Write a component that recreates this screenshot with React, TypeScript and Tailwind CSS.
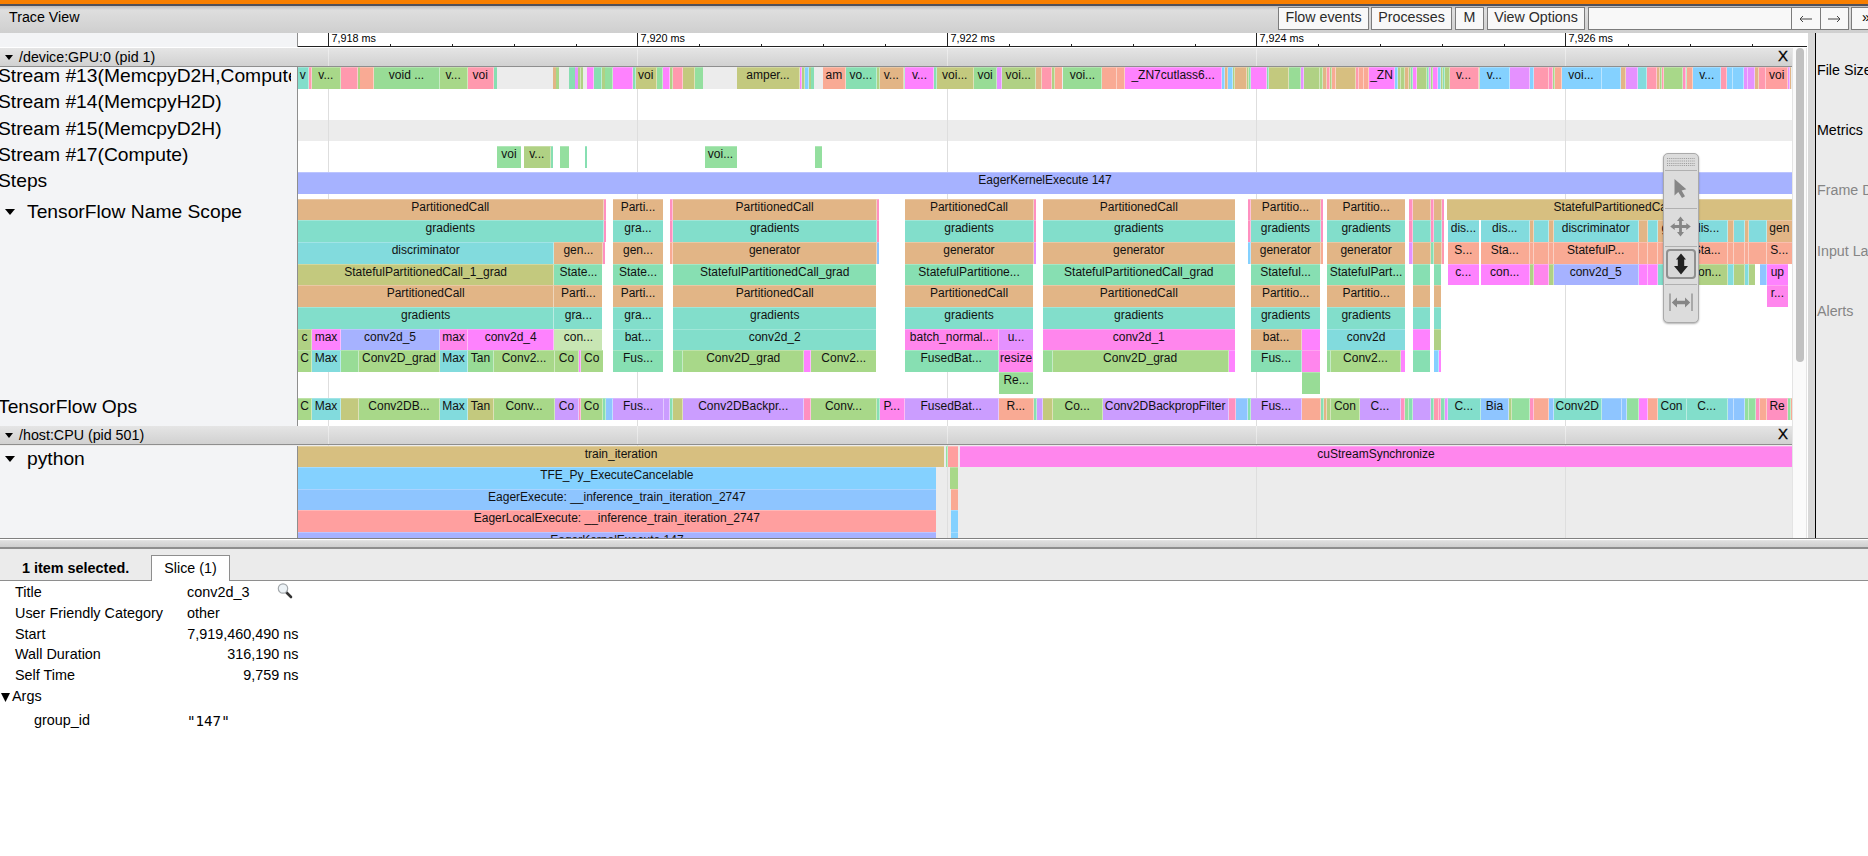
import React from "react";

const COLORS = {
  tan: "bg-[#e2b586]",
  sand: "bg-[#d7bf80]",
  teal: "bg-[#82decb]",
  cyan: "bg-[#82dbdd]",
  olive: "bg-[#c3c97e]",
  mint: "bg-[#87dfb2]",
  green: "bg-[#98dc96]",
  emerald: "bg-[#94df9f]",
  lime: "bg-[#a8d889]",
  moss: "bg-[#b0d184]",
  pale: "bg-[#c8e6b4]",
  pink: "bg-[#ff99ae]",
  rose: "bg-[#ff90c0]",
  salmon: "bg-[#f9aa94]",
  red: "bg-[#ff9f9f]",
  magenta: "bg-[#fe82fe]",
  hot: "bg-[#ff86ed]",
  violet: "bg-[#e591ff]",
  purple: "bg-[#cb9dff]",
  peri: "bg-[#a6b2ff]",
  blue: "bg-[#8ec5ff]",
  sky: "bg-[#84d1ff]",
};

type Color = keyof typeof COLORS;
type Slice = [number, number, Color, string?];

const TRACK_START = 298;
const MAJOR_TICKS = [
  { x: 328, label: "7,918 ms" },
  { x: 637, label: "7,920 ms" },
  { x: 947, label: "7,922 ms" },
  { x: 1256, label: "7,924 ms" },
  { x: 1565, label: "7,926 ms" },
];
const MINOR_TICKS = Array.from({ length: 24 }, (_, i) => i)
  .filter((i) => i % 5 !== 0)
  .map((i) => Math.round(328 + i * 61.9));

const stream13: Slice[] = [
  [298, 308, "teal", "v"], [308.7, 311, "pink"], [311.7, 340, "lime", "v..."], [341, 357.7, "pink"],
  [358, 360, "moss"], [360, 373.3, "salmon"], [374.3, 439, "green", "void ..."], [439.7, 467, "lime", "v..."],
  [467.7, 493.3, "pink", "voi"], [493.7, 497, "mint"], [553.3, 556, "tan"], [556, 559, "lime"],
  [569.3, 575.3, "mint"], [575.5, 577.5, "violet"], [577.7, 580.5, "moss"], [581, 583.3, "moss"],
  [586.7, 593.3, "magenta"], [593.7, 602, "mint"], [602.3, 605.5, "moss"], [605.5, 612, "emerald"],
  [613.3, 632.7, "magenta"], [633, 635, "mint"], [635.7, 656.3, "olive", "voi"], [657, 662.3, "emerald"],
  [663.3, 669.7, "magenta"], [670, 672.5, "moss"], [673, 682, "pink"], [683, 694.3, "olive"],
  [695.3, 703, "emerald"], [737, 799.7, "olive", "amper..."], [800.3, 802, "magenta"], [802.3, 804, "moss"],
  [804.7, 808.3, "sky"], [809, 811, "moss"], [811, 814, "mint"], [822.7, 845.3, "salmon", "am"],
  [846.3, 876.3, "mint", "vo..."], [877, 879.5, "moss"], [880, 903.7, "tan", "v..."], [904, 905.3, "mint"],
  [905.7, 934.3, "magenta", "v..."], [934.7, 936.5, "mint"], [937, 972.7, "olive", "voi..."],
  [974, 997, "green", "voi"], [997.7, 1001.3, "violet"], [1002, 1035, "moss", "voi..."], [1036, 1042, "tan"],
  [1042.7, 1051.7, "pink"], [1052, 1054.5, "moss"], [1055, 1062.3, "salmon"], [1063.7, 1101.7, "green", "voi..."],
  [1102.7, 1116.5, "salmon"], [1117, 1123.7, "salmon"], [1125, 1222, "magenta", "_ZN7cutlass6..."],
  [1222.7, 1224.7, "sky"], [1225, 1227, "tan"], [1228, 1233, "sky"], [1233.3, 1235.2, "moss"],
  [1235.7, 1246.7, "tan"], [1247, 1249, "moss"], [1249.5, 1251, "mint"], [1251.3, 1267, "magenta"],
  [1267.3, 1269, "mint"], [1269.3, 1288.7, "olive"], [1289.7, 1300.3, "green"], [1301, 1303.7, "violet"],
  [1304.7, 1320, "moss"], [1320.5, 1323.3, "lime"], [1323.7, 1327, "tan"], [1327.5, 1330, "pink"],
  [1330.5, 1332, "moss"], [1332.3, 1336.3, "salmon"], [1336.7, 1356, "sand"], [1356.7, 1359, "pink"],
  [1359.7, 1363.5, "salmon"], [1364, 1368, "salmon"], [1369, 1395.3, "magenta", "_ZN"], [1395.7, 1397.7, "sky"],
  [1398, 1400, "moss"], [1401, 1405, "moss"], [1405.3, 1408.7, "tan"], [1409, 1410.5, "moss"], [1411, 1412.7, "mint"],
  [1413, 1417, "magenta"], [1417.7, 1426.5, "moss"], [1427, 1429, "mint"], [1429.5, 1431, "violet"],
  [1431.3, 1433, "lime"], [1433.5, 1437.7, "magenta"], [1438.3, 1441, "sky"], [1441.3, 1443, "moss"],
  [1443.3, 1445, "mint"], [1445.5, 1449, "moss"], [1450, 1478.7, "pink", "v..."], [1479, 1480.3, "moss"],
  [1480.7, 1509, "sky", "v..."], [1510, 1529, "violet"], [1530, 1533, "sky"], [1534, 1548.5, "pink"],
  [1549, 1553, "rose"], [1553.3, 1555, "lime"], [1555.7, 1561.3, "salmon"], [1562, 1601, "sky", "voi..."],
  [1602, 1621, "sky"], [1621.7, 1626, "tan"], [1626.7, 1637.7, "violet"], [1638.7, 1647, "cyan"],
  [1647.7, 1657.3, "pink"], [1657.7, 1659.5, "tan"], [1660, 1661.5, "lime"], [1662, 1664, "pink"],
  [1664.5, 1683, "lime"], [1683.5, 1685.5, "rose"], [1686, 1687.3, "emerald"], [1687.7, 1692.7, "salmon"],
  [1693.7, 1721, "sky", "v..."], [1721.7, 1727.3, "pink"], [1728, 1733.3, "sky"], [1734, 1744.3, "sky"],
  [1745, 1748, "violet"], [1748.7, 1755, "violet"], [1755.7, 1758.7, "tan"], [1759.7, 1766, "pink"],
  [1767, 1788, "red", "voi"], [1788.5, 1790, "violet"], [1791, 1792, "tan"],
];

const stream17: Slice[] = [
  [497, 521, "emerald", "voi"], [523.5, 550.5, "moss", "v..."], [551, 553, "mint"],
  [560, 568.5, "emerald"], [584.5, 586.5, "mint"], [704.5, 736.5, "emerald", "voi..."], [815, 822, "emerald"],
];

const steps: Slice[] = [[298, 1792, "peri", "EagerKernelExecute 147"]];

const scopeColumns = (color: Color, labels: string[], edges: (Color | null)[]): Slice[] => {
  const spans: [number, number][] = [
    [603.5, 605.5], [612.7, 663.3], [670, 672], [673, 876.5], [877.3, 879.3], [904.7, 1033.5], [1034.3, 1036.3],
    [1042.7, 1235], [1248, 1250], [1251, 1320.3], [1321, 1323], [1327.3, 1405], [1409.5, 1411.7],
    [1412.7, 1430], [1431, 1433], [1433.7, 1441], [1442, 1444.5],
  ];
  const edgeAt = [0, 2, 4, 6, 8, 10, 12, 14, 16];
  let label = 0;
  return spans.flatMap(([a, b], i): Slice[] => {
    const e = edgeAt.indexOf(i);
    if (e >= 0) {
      const c = edges[e];
      return c ? [[a, b, c]] : [];
    }
    return [[a, b, color, labels[label++]]];
  });
};

const none: (Color | null)[] = [];
const roseEdges: (Color | null)[] = ["rose", "rose", "rose", "rose", "rose", "rose", "rose", "rose", "rose"];
const mixedEdges: (Color | null)[] = ["rose", "salmon", "blue", "violet", "sky", "salmon", "violet", "mint", "pink"];

const tailSpans: [number, number][] = [
  [1448, 1479], [1480.7, 1529], [1530, 1533.3], [1534, 1548], [1549, 1553], [1553.7, 1638], [1639, 1647],
  [1647.7, 1657], [1657.7, 1686], [1686.7, 1727.3], [1728, 1733.3], [1734, 1744], [1745, 1748],
];
const tail = (colors: Color[], labels: Record<number, string>): Slice[] =>
  tailSpans.map(([a, b], i): Slice => [a, b, colors[i], labels[i]]);

const nameScope: Slice[][] = [
  [
    [298, 602.5, "tan", "PartitionedCall"],
    ...scopeColumns("tan", ["Parti...", "PartitionedCall", "PartitionedCall", "PartitionedCall", "Partitio...", "Partitio..."], roseEdges),
    [1447.5, 1792, "sand", "StatefulPartitionedCall_1"],
  ],
  [
    [298, 602.5, "teal", "gradients"],
    ...scopeColumns("teal", ["gra...", "gradients", "gradients", "gradients", "gradients", "gradients"], roseEdges),
    ...tail(["cyan", "cyan", "tan", "cyan", "tan", "cyan", "tan", "cyan", "tan", "cyan", "tan", "cyan", "tan"], { 0: "dis...", 1: "dis...", 5: "discriminator", 8: "gen", 9: "dis..." }),
    [1749, 1766, "cyan"], [1767, 1792, "tan", "gen"],
  ],
  [
    [298, 553.5, "cyan", "discriminator"], [554.3, 602.5, "tan", "gen..."],
    ...scopeColumns("tan", ["gen...", "generator", "generator", "generator", "generator", "generator"], mixedEdges),
    ...tail(["salmon", "salmon", "salmon", "salmon", "salmon", "salmon", "salmon", "salmon", "salmon", "salmon", "salmon", "salmon", "salmon"], { 0: "S...", 1: "Sta...", 5: "StatefulP...", 9: "Sta..." }),
    [1749, 1766, "salmon"], [1767, 1792, "salmon", "S..."],
  ],
  [
    [298, 553.5, "olive", "StatefulPartitionedCall_1_grad"], [554.3, 602.5, "mint", "State..."],
    ...scopeColumns("mint", ["State...", "StatefulPartitionedCall_grad", "StatefulPartitione...", "StatefulPartitionedCall_grad", "Stateful...", "StatefulPart..."], none),
    ...tail(["magenta", "magenta", "moss", "hot", "moss", "peri", "magenta", "magenta", "teal", "moss", "cyan", "moss", "cyan"], { 0: "c...", 1: "con...", 5: "conv2d_5", 9: "con..." }),
    [1749, 1755, "moss"], [1760, 1766, "blue"], [1767, 1788, "magenta", "up"],
  ],
  [
    [298, 553.5, "tan", "PartitionedCall"], [554.3, 602.5, "tan", "Parti..."],
    ...scopeColumns("tan", ["Parti...", "PartitionedCall", "PartitionedCall", "PartitionedCall", "Partitio...", "Partitio..."], none),
    [1767, 1788, "hot", "r..."],
  ],
  [
    [298, 553.5, "teal", "gradients"], [554.3, 602.5, "teal", "gra..."],
    ...scopeColumns("teal", ["gra...", "gradients", "gradients", "gradients", "gradients", "gradients"], none),
  ],
  [
    [298, 311, "moss", "c"], [312, 340, "magenta", "max"], [341, 439, "peri", "conv2d_5"], [440, 467, "hot", "max"],
    [468, 553.5, "magenta", "conv2d_4"], [554.3, 602.5, "pale", "con..."], [612.7, 663.3, "teal", "bat..."],
    [673, 876.5, "teal", "conv2d_2"], [904.7, 998, "hot", "batch_normal..."], [998.7, 1033.5, "violet", "u..."],
    [1042.7, 1235, "hot", "conv2d_1"], [1251, 1301.5, "tan", "bat..."], [1302.3, 1320.3, "magenta"],
    [1327.3, 1405, "cyan", "conv2d"], [1412.7, 1430, "magenta"], [1433.7, 1441, "moss"],
  ],
  [
    [298, 311, "lime", "C"], [312, 340, "cyan", "Max"], [341, 358, "green"], [359, 439, "lime", "Conv2D_grad"],
    [440, 467, "cyan", "Max"], [468, 493, "green", "Tan"], [494, 554, "lime", "Conv2..."], [555, 578, "lime", "Co"],
    [579, 580.5, "magenta"], [581, 602.5, "lime", "Co"], [612.7, 663.3, "mint", "Fus..."], [673, 682, "green"],
    [683, 803.5, "lime", "Conv2D_grad"], [804.5, 810.3, "magenta"], [811, 876.5, "lime", "Conv2..."],
    [904.7, 998, "mint", "FusedBat..."], [998.7, 1033.5, "hot", "resize"], [1042.7, 1051.7, "green"],
    [1052.7, 1227.7, "lime", "Conv2D_grad"], [1228.7, 1235, "magenta"], [1251, 1301.5, "mint", "Fus..."],
    [1302.3, 1320.3, "hot"], [1327.3, 1330, "green"], [1331, 1400, "lime", "Conv2..."], [1401, 1405, "magenta"],
    [1412.7, 1430, "mint"], [1433.7, 1437.7, "sky"], [1439, 1441, "magenta"],
  ],
  [[998.7, 1033.5, "green", "Re..."], [1302.3, 1320.3, "green"]],
];

const ops: Slice[] = [
  [298, 311, "lime", "C"], [312, 340, "cyan", "Max"], [341, 358, "olive"], [359, 439, "lime", "Conv2DB..."],
  [440, 467, "cyan", "Max"], [468, 493, "olive", "Tan"], [494, 554, "lime", "Conv..."], [555, 578, "purple", "Co"],
  [579, 580.5, "rose"], [581, 602.5, "lime", "Co"], [603, 605, "mint"], [606, 612, "blue"],
  [612.7, 663.3, "purple", "Fus..."], [664.3, 669.5, "purple"], [670, 672, "mint"], [673, 682, "olive"],
  [683, 803.5, "purple", "Conv2DBackpr..."], [804.5, 810.3, "rose"], [811, 876.5, "lime", "Conv..."], [877, 879.5, "mint"],
  [880, 903.7, "hot", "P..."], [904.7, 998, "purple", "FusedBat..."], [998.7, 1033.5, "salmon", "R..."],
  [1034, 1036, "mint"], [1037, 1042, "purple"], [1042.7, 1051.7, "olive"], [1052.7, 1101.7, "lime", "Co..."],
  [1102.7, 1227.7, "purple", "Conv2DBackpropFilter"], [1228.7, 1234.7, "rose"], [1235.7, 1247, "blue"],
  [1247.7, 1250, "mint"], [1251, 1301.5, "purple", "Fus..."], [1302.3, 1320, "salmon"], [1320.7, 1323, "mint"],
  [1324, 1327, "tan"], [1327.5, 1330.5, "moss"], [1331, 1359, "lime", "Con"], [1360, 1400, "purple", "C..."],
  [1401, 1404.7, "rose"], [1405.3, 1409, "emerald"], [1409.5, 1411.7, "mint"], [1412.7, 1430, "purple"],
  [1431, 1433, "mint"], [1433.7, 1437.7, "pink"], [1438.7, 1441, "rose"], [1441.5, 1444, "mint"],
  [1445, 1447, "violet"], [1448, 1479.7, "teal", "C..."], [1480.7, 1509, "blue", "Bia"], [1509.5, 1511, "moss"],
  [1511.7, 1529, "emerald"], [1530, 1533.3, "rose"], [1534, 1548.3, "salmon"], [1549, 1553, "blue"],
  [1553.7, 1601, "teal", "Conv2D"], [1602, 1621, "blue"], [1621.7, 1625.7, "blue"], [1626.7, 1638, "emerald"],
  [1639, 1647, "magenta"], [1647.7, 1657, "salmon"], [1657.7, 1686, "teal", "Con"], [1686.7, 1727.3, "teal", "C..."],
  [1728, 1733.3, "blue"], [1734, 1744, "blue"], [1745, 1748, "emerald"], [1749, 1755, "emerald"],
  [1756, 1759, "rose"], [1760, 1766, "salmon"], [1767, 1788, "rose", "Re"], [1788.5, 1790.5, "emerald"], [1791, 1792, "salmon"],
];

const python: Slice[][] = [
  [[298, 944, "sand", "train_iteration"], [946, 948, "emerald"], [948.3, 958, "red"], [960, 1792, "hot", "cuStreamSynchronize"]],
  [[298, 935.7, "sky", "TFE_Py_ExecuteCancelable"], [950, 958, "lime"]],
  [[298, 935.7, "blue", "EagerExecute: __inference_train_iteration_2747"], [950.7, 958, "salmon"]],
  [[298, 935.7, "red", "EagerLocalExecute: __inference_train_iteration_2747"], [951, 958, "sky"]],
  [[298, 935.7, "peri", "EagerKernelExecute 147"], [951, 958, "sky"]],
];

/* Neighbouring slices share a soft edge; only real idle time leaves a gap. */
function joinSlices(slices: Slice[]) {
  return slices.map(([start, end, color, label], i) => {
    const next = slices[i + 1];
    const joined = next !== undefined && next[0] - end <= 1.3;
    return { start, end: joined ? next[0] : end, color, label, joined: joined && next[0] - end > 0.25 };
  });
}

function Track({ slices }: { slices: Slice[] }) {
  const items = joinSlices(slices);
  return (
    <div className="relative z-10 flex h-[21.67px] w-[1494px] overflow-hidden">
      {items.map(({ start, end, color, label, joined }, i) => (
        <div
          key={i}
          className={`flex h-full shrink-0 justify-center border-t border-t-white/25 text-[12px] leading-[14px] whitespace-nowrap text-[#111] ${joined ? "border-r border-r-white/45" : ""} ${COLORS[color]}`}
          style={{ width: end - start, marginLeft: start - (i ? items[i - 1].end : TRACK_START) }}
        >
          {label}
        </div>
      ))}
    </div>
  );
}

function Arrow({ className }: { className: string }) {
  return (
    <svg viewBox="0 0 10 6" preserveAspectRatio="none" className={className}>
      <path d="M0 0H10L5 6Z" fill="#000" />
    </svg>
  );
}

function GridLines({ light = false }: { light?: boolean }) {
  return (
    <>
      {MAJOR_TICKS.map((t) => (
        <div
          key={t.x}
          className={`absolute inset-y-0 w-px ${light ? "bg-white/40" : "bg-[#dedede]"}`}
          style={{ left: t.x }}
        />
      ))}
    </>
  );
}

function ProcessHeader({ title }: { title: string }) {
  return (
    <div className="relative flex h-[19px] w-[1792px] shrink-0 items-center border-b border-[#8e8e8e] bg-linear-to-b from-[#e5e5e5] to-[#d1d1d1] text-[14.25px] leading-[18px]">
      <GridLines light />
      <Arrow className="ml-[5px] h-[5px] w-[8px]" />
      <span className="ml-[6px]">{title}</span>
      <span className="mr-[3px] ml-auto w-[11px] pb-[3px] text-[15px] [-webkit-text-stroke:0.3px_#000]">X</span>
    </div>
  );
}

function Row({
  label,
  tracks,
  height,
  shaded,
  expandable,
}: {
  label: string;
  tracks: Slice[][];
  height: string;
  shaded?: boolean;
  expandable?: boolean;
}) {
  return (
    <div className={`flex shrink-0 ${height}`}>
      <div className="flex w-[298px] shrink-0 items-start overflow-hidden border-r border-[#8e8e8e] bg-[#f3f4f6] pr-[5px] text-[19.25px] whitespace-nowrap">
        {expandable ? (
          <div className="flex items-center pt-[3px] leading-[20px]">
            <Arrow className="ml-[5px] h-[6px] w-[10px]" />
            <span className="ml-[12px]">{label}</span>
          </div>
        ) : (
          <div className="-ml-[2px] w-[293px] overflow-hidden leading-[17px]">
            <span className="block h-[23px]">{label}</span>
          </div>
        )}
      </div>
      <div>
        <div className={shaded ? "bg-[#ececec]" : ""}>
          {tracks.map((t, i) => (
            <Track key={i} slices={t} />
          ))}
        </div>
      </div>
    </div>
  );
}

function Ruler() {
  return (
    <div className="flex h-[15px] w-[1807px] shrink-0 border-b border-white">
      <div className="w-[298px] shrink-0 border-r border-[#8e8e8e] bg-[#f3f4f6]" />
      <div className="grow border-b border-[#222] bg-white" />
      {MAJOR_TICKS.map((t) => (
        <div
          key={t.x}
          className="absolute top-0 h-[14px] border-l border-[#222] pl-[2.5px] text-[10.8px] leading-[10px]"
          style={{ left: t.x }}
        >
          {t.label}
        </div>
      ))}
      {MINOR_TICKS.map((x) => (
        <div key={x} className="absolute top-[11px] h-[3px] w-px bg-[#222]" style={{ left: x }} />
      ))}
    </div>
  );
}

function ModeTools() {
  return (
    <div className="absolute top-[120px] left-[1663px] z-20 flex h-[170px] w-[36px] flex-col items-center rounded-[5px] border border-[#aaa] bg-[#dcdcdc] shadow-[0_1px_2px_rgba(0,0,0,0.3)]">
      <svg viewBox="0 0 28 8" className="mt-[4px] h-[8px] w-[28px] shrink-0">
        {[0.5, 3, 5.5, 7.5].map((y) => (
          <path key={y} d={`M0 ${y}H28`} stroke="#8b8b8b" strokeWidth="0.8" strokeDasharray="1 0.9" />
        ))}
      </svg>
      <div className="mt-[4px] flex h-[38px] w-[32px] shrink-0 items-center justify-center border-t border-[#b0b0b0]">
        <svg viewBox="0 0 32 36" className="h-[36px] w-[32px]">
          <path d="M9.5 7V23.5L13.3 20L17 26L20 24.2L16.600 18.4L21.3 17.300Z" fill="#868686" />
        </svg>
      </div>
      <div className="flex h-[38px] w-[32px] shrink-0 items-center justify-center border-t border-[#b0b0b0]">
        <svg viewBox="0 0 32 36" className="h-[36px] w-[32px]">
          <path d="M15.500 6.500L19 11H16.900V15.100H21.300V13L25.800 16.500L21.300 20V17.900H16.900V22H19L15.500 26.500L12 22H14.100V17.900H9.700V20L5.200 16.500L9.700 13V15.100H14.100V11H12Z" fill="#868686" />
        </svg>
      </div>
      <div className="flex h-[38px] w-[32px] shrink-0 items-center justify-center border-t border-[#b0b0b0]">
        <div className="mb-[3px] flex h-[30px] w-[30px] items-center justify-center rounded-[4px] border-2 border-[#8f8f8f] bg-[#d8d8d8]">
          <svg viewBox="0 0 16 22" className="h-[22px] w-[16px]">
            <path d="M8 0.500L13 6.500H11.200V13H15L8 21.500L1 13H4.800V6.500H3Z" fill="#222" />
          </svg>
        </div>
      </div>
      <div className="flex h-[36px] w-[32px] shrink-0 items-center justify-center border-t border-[#b0b0b0]">
        <svg viewBox="0 0 32 36" className="h-[36px] w-[32px]">
          <path d="M5 8.500V26M27 8.500V26" stroke="#868686" strokeWidth="1.200" />
          <path d="M6.800 17.500L12 12.500V15.800H20V12.500L25.200 17.500L20 22.500V19.200H12V22.500Z" fill="#868686" />
        </svg>
      </div>
    </div>
  );
}

function ToolButton({ text, className }: { text: string; className: string }) {
  return (
    <div className={`h-[23px] shrink-0 border border-[#7c7c7c] bg-[#f8f8f8] text-center leading-[19px] text-[#2b2b2b] ${className}`}>
      {text}
    </div>
  );
}

function Detail({ name, value, numeric }: { name: string; value: React.ReactNode; numeric?: boolean }) {
  return (
    <div className="flex h-[20.85px] items-center">
      <span className="w-[172px] shrink-0">{name}</span>
      <span className={`flex w-[111.5px] whitespace-nowrap ${numeric ? "justify-end" : ""}`}>{value}</span>
    </div>
  );
}

export default function App() {
  return (
    <div className="flex h-[856px] w-[1868px] flex-col overflow-hidden bg-white font-['Liberation_Sans',Arial,sans-serif] text-black">
      <div className="h-[6px] shrink-0 border-b-2 border-[#50505a] bg-[#f87f00]" />
      <div className="flex h-[27px] shrink-0 items-start overflow-hidden bg-linear-to-b from-[#bcbcbc] via-[#dedede] via-15% to-[#cfcfcf] pt-px text-[14.25px]">
        <span className="w-[1278px] shrink-0 pl-[9px] leading-[20px]">Trace View</span>
        <ToolButton text="Flow events" className="w-[91px]" />
        <ToolButton text="Processes" className="ml-[2px] w-[81px]" />
        <ToolButton text="M" className="ml-[3px] w-[29px]" />
        <ToolButton text="View Options" className="ml-[3px] w-[98px]" />
        <div className="ml-[3px] h-[23px] w-[204px] shrink-0 border border-[#7c7c7c] bg-[#f8f8f8]" />
        {["M14 4L2 4M5 1L2 4L5 7", "M1 4L13 4M10 1L13 4L10 7"].map((d) => (
          <div key={d} className="-ml-px flex h-[23px] w-[29.5px] shrink-0 items-center justify-center border border-[#7c7c7c] bg-[#f8f8f8]">
            <svg viewBox="0 0 15 8" className="h-[8px] w-[15px]">
              <path d={d} fill="none" stroke="#444" />
            </svg>
          </div>
        ))}
        <div className="ml-[2px] h-[23px] w-[30px] shrink-0 border border-[#7c7c7c] bg-[#f8f8f8] pl-[10px] leading-[19px]">»</div>
      </div>

      <div className="flex h-[505px] shrink-0 overflow-hidden">
        <div className="relative flex h-full w-[1808px] shrink-0 flex-col">
          <Ruler />
          <div className="flex grow overflow-hidden">
            <div className="flex w-[1792px] shrink-0 flex-col">
              <ProcessHeader title="/device:GPU:0 (pid 1)" />
              <div className="relative flex h-[359px] shrink-0 flex-col">
                <GridLines />
                <Row label="Stream #13(MemcpyD2H,Compute)" tracks={[stream13]} height="h-[26.2px]" shaded />
                <Row label="Stream #14(MemcpyH2D)" tracks={[[]]} height="h-[26.5px]" />
                <Row label="Stream #15(MemcpyD2H)" tracks={[[]]} height="h-[26.2px]" shaded />
                <Row label="Stream #17(Compute)" tracks={[stream17]} height="h-[26.5px]" />
                <Row label="Steps" tracks={[steps]} height="h-[26.4px]" />
                <Row label="TensorFlow Name Scope" tracks={nameScope} height="h-[199.5px]" expandable />
                <Row label="TensorFlow Ops" tracks={[ops]} height="h-[27.7px]" />
              </div>
              <ProcessHeader title="/host:CPU (pid 501)" />
              <div className="relative flex h-[93px] shrink-0 flex-col overflow-hidden bg-[#ececec] pt-[0.5px]">
                <GridLines />
                <Row label="python" tracks={python} height="h-[93px]" shaded expandable />
              </div>
            </div>
            <div className="w-[15px] border-x border-[#e4e4e4] bg-[#fafafa] pl-[3px]">
              <div className="h-[314px] w-[8px] rounded-full bg-[#c1c1c1]" />
            </div>
          </div>
          <ModeTools />
        </div>
        <div className="w-[8px] shrink-0 border-r border-black bg-[#d8d8d8]" />
        <div className="flex w-[52px] shrink-0 flex-col overflow-hidden bg-[#ebebeb] pt-[7px] pl-px text-[14.25px] leading-[60.2px] whitespace-nowrap">
          <span>File Size Stats</span>
          <span>Metrics</span>
          <span className="text-[#858585]">Frame Data</span>
          <span className="text-[#858585]">Input Latency</span>
          <span className="text-[#858585]">Alerts</span>
        </div>
      </div>

      <div className="h-[11px] shrink-0 border-t border-b-2 border-t-[#808080] border-b-[#8e8e8e] bg-linear-to-b from-white from-10% via-[#dfdfdf] via-20% to-[#cfcfcf]" />
      <div className="flex h-[32px] shrink-0 items-end border-b border-[#8e8e8e] bg-[#ebebeb] text-[14.4px]">
        <span className="w-[151px] pb-[3px] pl-[22px] leading-[18px] font-bold">1 item selected.</span>
        <div className="-mb-px h-[26px] w-[79px] border border-b-0 border-[#8e8e8e] bg-white text-center text-[14.25px] leading-[24px]">Slice (1)</div>
      </div>
      <div className="flex flex-col pt-[0.5px] pl-[15px] text-[14.4px] leading-[18px]">
        <Detail
          name="Title"
          value={
            <>
              <span className="w-[90px]">conv2d_3</span>
              <svg viewBox="0 0 16 16" className="h-[16px] w-[16px]">
                <path d="M9.5 9.5L14 14" stroke="#333" strokeWidth="2.6" strokeLinecap="round" />
                <circle cx="6" cy="5.5" r="4.7" fill="#edf3f7" stroke="#a3a8ac" strokeWidth="1.2" />
              </svg>
            </>
          }
        />
        <Detail name="User Friendly Category" value="other" />
        <Detail name="Start" value="7,919,460,490 ns" numeric />
        <Detail name="Wall Duration" value="316,190 ns" numeric />
        <Detail name="Self Time" value="9,759 ns" numeric />
        <div className="-ml-[14px] flex h-[20.85px] items-center">
          <Arrow className="mt-[3px] h-[9px] w-[9px]" />
          <span className="ml-[2px]">Args</span>
        </div>
        <div className="flex h-[27px] items-center pl-[19px]">
          <span className="w-[153px]">group_id</span>
          <span className="pt-[2px] font-['DejaVu_Sans_Mono',monospace] text-[14.2px]">"147"</span>
        </div>
      </div>
    </div>
  );
}
